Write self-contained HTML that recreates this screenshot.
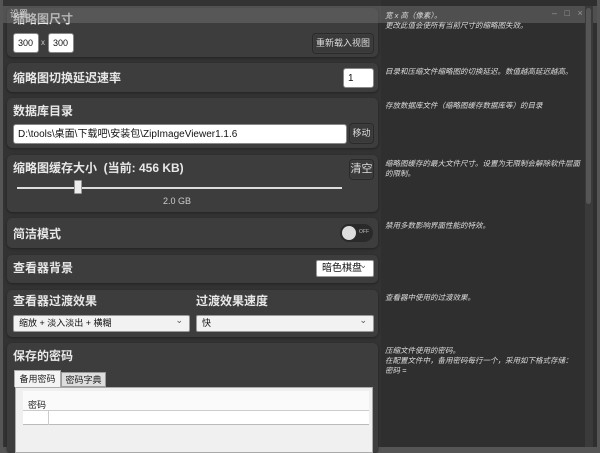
<!DOCTYPE html><html><head><style>
*{box-sizing:border-box;margin:0;padding:0}
body{width:600px;height:450px;background:#555;font-family:"Liberation Sans","Noto Sans CJK SC",sans-serif;position:relative;overflow:hidden;color:#eee}
.win{position:absolute;left:3px;top:0;width:594px;height:447px;background:#2f2f2f}
.left{position:absolute;left:3px;top:0;width:378px;height:447px;background:#333}
.p{position:absolute;left:7px;width:371px;background:#3d3d3d;border-radius:5px;box-shadow:0 1px 2px #222}
.h{position:absolute;left:6px;font-size:12px;line-height:14px;font-weight:bold;color:#e8e8e8;white-space:nowrap}
.in{position:absolute;background:#fff;border:1px solid #888;border-radius:3px;color:#111;font-size:10px;padding:2px 4px;height:20px;line-height:15px;white-space:nowrap}
.btn{position:absolute;background:#3a3a3a;border:1px solid #2a2a2a;border-radius:4px;color:#ddd;font-size:9px;text-align:center;line-height:19px;box-shadow:0 0 1px #555 inset;white-space:nowrap}
.sel{position:absolute;background:#f2f2f2;border:1px solid #999;border-radius:2px;color:#111;font-size:9px;height:17px;line-height:15px;padding-left:5px;white-space:nowrap}
.sel:after{content:"⌄";position:absolute;right:6px;top:-3px;font-size:9px;color:#555}
.d{position:absolute;left:385px;font-size:7.5px;font-style:italic;color:#ddd;line-height:10px;white-space:nowrap}
</style></head><body>
<div class="win"></div><div class="left"></div>
<div class="p" style="top:8px;height:49px"><div class="h" style="top:4px">缩略图尺寸</div>
<div class="in" style="left:6px;top:25px;width:26px;font-size:9px">300</div><span style="position:absolute;left:34px;top:30px;font-size:8px;color:#ccc">x</span><div class="in" style="left:41px;top:25px;width:26px;font-size:9px">300</div>
<div class="btn" style="left:305px;top:25px;width:62px;height:21px">重新载入视图</div></div>
<div style="position:absolute;left:3px;top:6px;width:594px;height:17px;background:rgba(120,120,120,.45)"></div>
<div style="position:absolute;left:10px;top:7px;font-size:9px;color:#ddd">设置</div>
<div style="position:absolute;left:552px;top:8px;font-size:9px;color:#999">–&nbsp;&nbsp;&nbsp;□&nbsp;&nbsp;&nbsp;×</div>
<div class="p" style="top:63px;height:29px"><div class="h" style="top:8px">缩略图切换延迟速率</div><div class="in" style="left:336px;top:5px;width:31px">1</div></div>
<div class="p" style="top:98px;height:50px"><div class="h" style="top:6px">数据库目录</div><div class="in" style="left:6px;top:26px;width:334px">D:\tools\桌面\下载吧\安装包\ZipImageViewer1.1.6</div><div class="btn" style="left:342px;top:25px;width:25px;height:21px">移动</div></div>
<div class="p" style="top:155px;height:57px"><div class="h" style="top:6px">缩略图缓存大小 &nbsp;(当前: 456 KB)</div><div class="btn" style="left:342px;top:4px;width:25px;height:21px;font-size:11px">清空</div>
<div style="position:absolute;left:10px;top:32px;width:325px;height:2px;background:#ddd"></div><div style="position:absolute;left:67px;top:25px;width:8px;height:14px;background:#eee;border:1px solid #999;border-radius:1px"></div>
<div style="position:absolute;left:156px;top:41px;font-size:9px;color:#ccc">2.0 GB</div></div>
<div class="p" style="top:218px;height:30px"><div class="h" style="top:9px">简洁模式</div><div style="position:absolute;left:333px;top:6px;width:33px;height:18px;border-radius:9px;background:#2a2a2a"><div style="position:absolute;left:2px;top:2px;width:14px;height:14px;border-radius:7px;background:#ddd"></div><span style="position:absolute;left:19px;top:5px;font-size:5px;color:#bbb">OFF</span></div></div>
<div class="p" style="top:255px;height:28px"><div class="h" style="top:6px">查看器背景</div><div class="sel" style="left:309px;top:5px;width:58px;height:17px;font-size:10px;background:#fff">暗色棋盘</div></div>
<div class="p" style="top:290px;height:47px"><div class="h" style="top:4px">查看器过渡效果</div><div class="h" style="left:189px;top:4px">过渡效果速度</div>
<div class="sel" style="left:6px;top:25px;width:177px">缩放 + 淡入淡出 + 横糊</div><div class="sel" style="left:189px;top:25px;width:178px">快</div></div>
<div class="p" style="top:343px;height:110px"><div class="h" style="top:6px">保存的密码</div>
<div style="position:absolute;left:7px;top:27px;width:47px;height:17px;background:#f4f4f4;color:#222;font-size:9px;text-align:center;line-height:16px;border:1px solid #aaa;border-bottom:none">备用密码</div>
<div style="position:absolute;left:54px;top:29px;width:45px;height:15px;background:#ddd;color:#222;font-size:9px;text-align:center;line-height:14px;border:1px solid #999">密码字典</div>
<div style="position:absolute;left:8px;top:44px;width:358px;height:66px;background:#eff0ef;border:1px solid #aaa">
<div style="position:absolute;left:7px;top:3px;width:346px;height:20px;background:#fafafa;border-bottom:1px solid #ccc;font-size:9px;color:#222;padding:7px 0 0 5px">密码</div>
<div style="position:absolute;left:7px;top:23px;width:346px;height:14px;background:#fff;border-bottom:1px solid #bbb"><div style="position:absolute;left:25px;top:0;height:14px;border-left:1px solid #ccc"></div></div></div></div>
<div class="d" style="top:11px">宽 x 高（像素）。<br>更改此值会使所有当前尺寸的缩略图失效。</div>
<div class="d" style="top:67px">目录和压缩文件缩略图的切换延迟。数值越高延迟越高。</div>
<div class="d" style="top:101px">存放数据库文件（缩略图缓存数据库等）的目录</div>
<div class="d" style="top:159px">缩略图缓存的最大文件尺寸。设置为无限制会解除软件层面<br>的限制。</div>
<div class="d" style="top:221px">禁用多数影响界面性能的特效。</div>
<div class="d" style="top:293px">查看器中使用的过渡效果。</div>
<div class="d" style="top:346px">压缩文件使用的密码。<br>在配置文件中，备用密码每行一个，采用如下格式存储：<br>密码 =</div>
<div style="position:absolute;left:585px;top:6px;width:8px;height:441px;background:#3a3a3a"></div>
<div style="position:absolute;left:586px;top:8px;width:5px;height:196px;background:#555;border-radius:3px"></div>
</body></html>
